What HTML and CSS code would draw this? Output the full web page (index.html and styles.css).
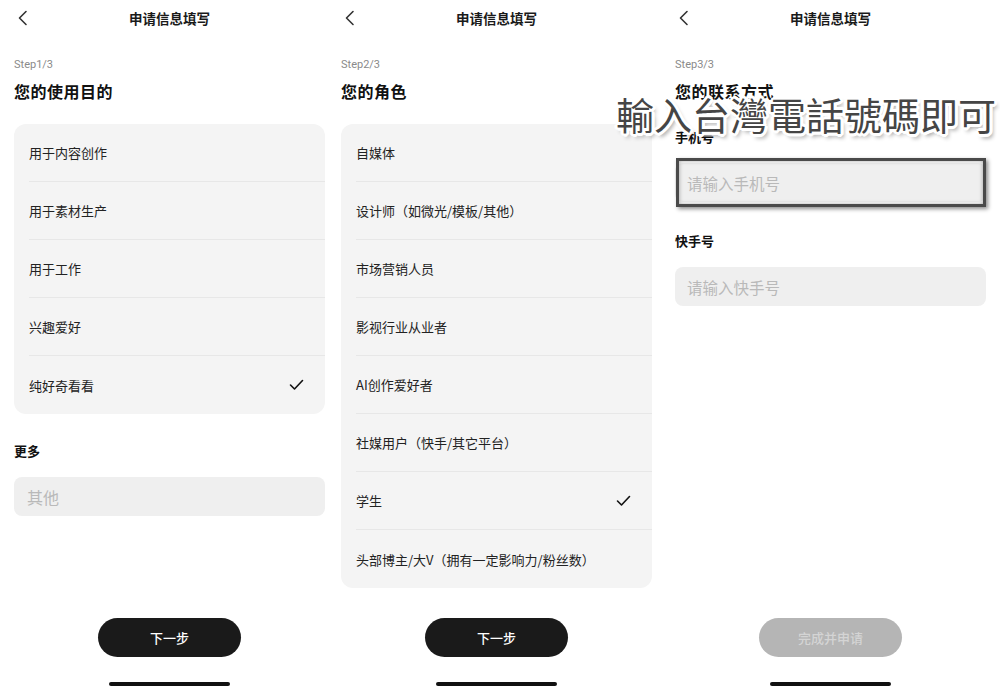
FILE: index.html
```html
<!DOCTYPE html>
<html lang="zh-CN">
<head>
<meta charset="utf-8">
<title>申请信息填写</title>
<link rel="stylesheet" href="styles.css">
</head>
<body>
<div class="screens">
  <section class="screen s1">
    <header class="nav">
      <svg class="back" width="12" height="16" viewBox="0 0 12 16"><path d="M9 1.5 L2.5 8 L9 14.5" fill="none" stroke="#333" stroke-width="1.6" stroke-linecap="round" stroke-linejoin="round"/></svg>
      <div class="nav-title">申请信息填写</div>
      <span></span>
    </header>
    <div class="step">Step1/3</div>
    <h1 class="heading">您的使用目的</h1>
    <div class="card">
      <div class="row">用于内容创作</div>
      <div class="row">用于素材生产</div>
      <div class="row">用于工作</div>
      <div class="row">兴趣爱好</div>
      <div class="row">纯好奇看看<svg class="check" width="15" height="12" viewBox="0 0 15 12"><path d="M1.5 6 L5.5 10 L13.5 1.5" fill="none" stroke="#111" stroke-width="1.6" stroke-linecap="round" stroke-linejoin="round"/></svg></div>
    </div>
    <div class="label more">更多</div>
    <div class="input">其他</div>
    <footer class="foot">
      <div class="btn">下一步</div>
      <div class="home"></div>
    </footer>
  </section>

  <section class="screen s2">
    <header class="nav">
      <svg class="back" width="12" height="16" viewBox="0 0 12 16"><path d="M9 1.5 L2.5 8 L9 14.5" fill="none" stroke="#333" stroke-width="1.6" stroke-linecap="round" stroke-linejoin="round"/></svg>
      <div class="nav-title">申请信息填写</div>
      <span></span>
    </header>
    <div class="step">Step2/3</div>
    <h1 class="heading">您的角色</h1>
    <div class="card">
      <div class="row">自媒体</div>
      <div class="row">设计师（如微光/模板/其他）</div>
      <div class="row">市场营销人员</div>
      <div class="row">影视行业从业者</div>
      <div class="row">AI创作爱好者</div>
      <div class="row">社媒用户（快手/其它平台）</div>
      <div class="row">学生<svg class="check" width="15" height="12" viewBox="0 0 15 12"><path d="M1.5 6 L5.5 10 L13.5 1.5" fill="none" stroke="#111" stroke-width="1.6" stroke-linecap="round" stroke-linejoin="round"/></svg></div>
      <div class="row">头部博主/大V（拥有一定影响力/粉丝数）</div>
    </div>
    <footer class="foot">
      <div class="btn">下一步</div>
      <div class="home"></div>
    </footer>
  </section>

  <section class="screen s3">
    <header class="nav">
      <svg class="back" width="12" height="16" viewBox="0 0 12 16"><path d="M9 1.5 L2.5 8 L9 14.5" fill="none" stroke="#333" stroke-width="1.6" stroke-linecap="round" stroke-linejoin="round"/></svg>
      <div class="nav-title">申请信息填写</div>
      <span></span>
    </header>
    <div class="step">Step3/3</div>
    <h1 class="heading">您的联系方式</h1>
    <div class="label phone-label">手机号</div>
    <div class="input-wrap">
      <div class="input small">请输入手机号</div>
      <div class="mark"></div>
    </div>
    <div class="label ks-label">快手号</div>
    <div class="input small">请输入快手号</div>
    <footer class="foot">
      <div class="btn disabled">完成并申请</div>
      <div class="home"></div>
    </footer>
  </section>

  <div class="caption">輸入台灣電話號碼即可</div>
</div>
</body>
</html>
```

FILE: styles.css
```css
* { box-sizing: border-box; }
html, body { margin: 0; padding: 0; background: #fff; }
body {
  font-family: "Noto Sans CJK SC", "Noto Sans", sans-serif;
  color: #1a1a1a;
  width: 1000px;
  height: 692px;
  overflow: hidden;
}
.screens {
  position: relative;
  display: flex;
  height: 692px;
}
.screen {
  flex: none;
  width: 339px;
  height: 692px;
  padding: 0 14px;
  display: flex;
  flex-direction: column;
}
.s2 { margin-left: -12px; }
.s3 { margin-left: -5px; }

.nav {
  height: 36px;
  display: grid;
  grid-template-columns: 1fr auto 1fr;
  align-items: center;
}
.back { margin-left: 3px; display: block; }
.nav-title {
  font-size: 13.5px;
  font-weight: 700;
  color: #1a1a1a;
  line-height: 18px;
}
.step {
  margin-top: 22px;
  font-family: Roboto, "Noto Sans", sans-serif;
  font-size: 11px;
  line-height: 14px;
  color: #8a8a8a;
}
.heading {
  margin: 8px 0 0;
  font-size: 16px;
  letter-spacing: 0.5px;
  font-weight: 700;
  line-height: 22px;
  color: #111;
}
.card {
  margin-top: 22px;
  background: #f4f4f4;
  border-radius: 12px;
}
.row {
  height: 58px;
  margin-left: 15px;
  padding-right: 21px;
  display: flex;
  align-items: center;
  justify-content: space-between;
  font-size: 13px;
  color: #222;
  border-bottom: 1px solid #e7e7e7;
}
.row:last-child { border-bottom: none; }
.check { display: block; }

.label {
  font-size: 13px;
  font-weight: 700;
  line-height: 18px;
  color: #111;
}
.more { margin-top: 28px; }
.input {
  margin-top: 17px;
  height: 39px;
  border-radius: 8px;
  background: #efefef;
  color: #b9b9b9;
  font-size: 16px;
  padding-left: 13px;
  display: flex;
  align-items: center;
}
.input.small { font-size: 15.5px; padding-left: 12px; }
.phone-label { margin-top: 26px; }
.input-wrap { position: relative; margin-top: 17px; }
.input-wrap .input { margin-top: 0; }
.mark {
  position: absolute;
  top: -5px;
  bottom: -5px;
  left: 1px;
  right: 0;
  border: 3.5px solid #4a4a4a;
  box-shadow: 2px 2px 4px rgba(0,0,0,0.45), inset 0 0 4px rgba(0,0,0,0.35);
}
.ks-label { margin-top: 30px; }
.ks-label + .input { margin-top: 17px; }

.foot {
  margin-top: auto;
  display: flex;
  flex-direction: column;
  align-items: center;
  padding-bottom: 6px;
}
.btn {
  width: 143px;
  height: 39px;
  border-radius: 20px;
  background: #1a1a1a;
  color: #fff;
  font-size: 13px;
  font-weight: 500;
  display: flex;
  align-items: center;
  justify-content: center;
}
.btn.disabled {
  background: #b5b5b5;
  color: #d4d4d4;
}
.home {
  margin-top: 25px;
  width: 121px;
  height: 4px;
  border-radius: 2px;
  background: #111;
}

.caption {
  position: absolute;
  left: 616px;
  top: 94px;
  font-family: "Noto Sans CJK TC", "Noto Sans CJK SC", sans-serif;
  font-size: 38px;
  line-height: 40px;
  color: #454545;
  white-space: nowrap;
  text-shadow:
    2px 0 0 #fff, -2px 0 0 #fff, 0 2px 0 #fff, 0 -2px 0 #fff,
    2px 2px 0 #fff, -2px -2px 0 #fff, 2px -2px 0 #fff, -2px 2px 0 #fff,
    3px 0 0 #fff, -3px 0 0 #fff, 0 3px 0 #fff, 0 -3px 0 #fff,
    3px 1px 0 #fff, -3px 1px 0 #fff, 1px 3px 0 #fff, 1px -3px 0 #fff,
    3px 4px 4px rgba(0,0,0,0.45);
}
```
